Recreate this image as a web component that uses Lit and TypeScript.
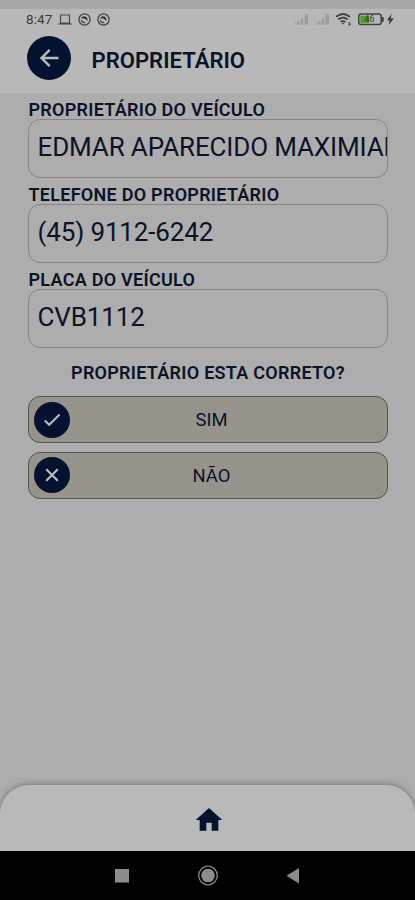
import { LitElement, html, css, svg } from "lit";
import { customElement } from "lit/decorators.js";

@customElement("app-field")
class AppField extends LitElement {
  static properties = { label: {}, value: {} };
  declare label: string;
  declare value: string;
  static styles = css`
    :host { display: block; height: 85px; box-sizing: border-box; }
    .label { height: 26px; line-height: 33px; padding-left: 0.5px; font-size: 18px; font-weight: 600; letter-spacing: 0.27px; white-space: nowrap; }
    .box { height: 59px; box-sizing: border-box; border: 1px solid #858585; border-radius: 12px;
      padding-left: 8.5px; overflow: hidden; white-space: nowrap; font-size: 26px; letter-spacing: -0.14px; line-height: 55px; }
    .value { display: block; overflow: hidden; }
  `;
  render() {
    return html`<div class="label">${this.label}</div>
      <div class="box"><span class="value">${this.value}</span></div>`;
  }
}

@customElement("app-root")
class AppRoot extends LitElement {
  static styles = css`
    :host { display: flex; flex-direction: column; width: 415px; height: 900px; overflow: hidden;
      background: #adadad; color: #0b1329; font-family: Roboto, "Liberation Sans", sans-serif; }
    svg { display: block; flex: none; }
    .strip { height: 9px; background: #a9a9a9; flex: none; }
    header { height: 84px; flex: none; background: #b8b8b8; }
    .status { height: 21px; display: flex; align-items: center; padding: 0 20px 0 26px; box-sizing: border-box; color: #3b3b3b; }
    .time { font-size: 13.5px; line-height: 21px; width: 32px; letter-spacing: 0.1px; }
    .grow { flex: 1; }
    .bar { display: flex; align-items: center; padding-left: 27px; margin-top: 6px; height: 44px; }
    .round { display: flex; align-items: center; justify-content: center; border-radius: 50%; background: #03132f; flex: none; }
    .back { width: 44px; height: 44px; }
    h1 { margin: 4px 0 0 20.5px; font-size: 22.1px; line-height: 28px; font-weight: 600; }
    main { flex: 1; padding: 0 27px 0 28px; }
    .question { height: 48px; line-height: 49px; text-align: center; font-size: 18px; font-weight: 600; letter-spacing: 0.27px; }
    .choice { height: 47px; box-sizing: border-box; border: 1px solid #555550; border-radius: 12px; background: #96938a;
      display: flex; align-items: center; padding: 0 34px 0 5px; margin-bottom: 8.5px; font-size: 18.4px; }
    .choice .round { width: 36px; height: 36px; }
    .choice span { flex: 1; text-align: center; }
    .nav { height: 66px; flex: none; border-radius: 29px 29px 0 0; background: #b9b9b9; box-shadow: 0 -1px 6px #777;
      display: flex; justify-content: center; padding: 19px 0 0 3px; box-sizing: border-box; }
  `;

  private signal() {
    return svg`<path d="M0 12.5h2v-2zM3 12.5h2.5V8.5L3 10zM6.7 12.5h2.5V6L6.7 7.5zM10.5 12.5h3.5V5h-3.5z" fill="#9c9c9c"/><path d="M11 2l3 3M14 2l-3 3" stroke="#858585"/>`;
  }
  private swirl() {
    return html`<svg width="19" height="15" viewBox="0 0 19 15"><circle cx="7.5" cy="7.5" r="5.6" fill="none" stroke="#444" stroke-width="1.3"/><path d="M4.2 6.8Q4.4 4.3 7.2 4.3Q10.6 4.6 10.6 8.8L7 6.2z" fill="#333"/><path d="M4.3 8.2Q5 10.8 8.2 10.7" fill="none" stroke="#444" stroke-width="1.2"/></svg>`;
  }
  render() {
    return html`
      <div class="strip"></div>
      <header>
        <div class="status">
          <span class="time">8:47</span>
          <svg width="19" height="15" viewBox="0 0 19 15"><path d="M2.5 3h9v8h-9zM0 12h14" fill="none" stroke="#494949" stroke-width="1.2"/></svg>
          ${this.swirl()}${this.swirl()}
          <span class="grow"></span>
          <svg width="21" height="15" viewBox="0 0 21 15">${this.signal()}</svg>
          <svg width="21" height="15" viewBox="0 0 21 15">${this.signal()}</svg>
          <svg width="22" height="15" viewBox="0 0 22 15"><g fill="none" stroke="#424242" stroke-width="1.7"><path d="M0 4.8Q7 -.8 14 4.8M2.3 7.5Q7 3.7 11.7 7.5M4.7 10Q7 8.2 9.3 10"/></g><path d="M5.6 11h2.8L7 12.8zM12 12h3l-1.5 1.8zM12 11.5h3l-1.5-1.8z" fill="#444"/></svg>
          <svg width="29" height="15" viewBox="0 0 29 15"><rect x=".8" y="2" width="22.4" height="10.6" rx="2.6" fill="none" stroke="#414141" stroke-width="1.5"/><path d="M24.8 5v4.8" stroke="#414141" stroke-width="1.8"/><rect x="2.3" y="3.7" width="9" height="7.2" rx="1" fill="#4f9e25"/><text x="6.5" y="10.4" font-size="8.7" font-family="Roboto" fill="#303a2b">46</text></svg>
          <svg width="8" height="15" viewBox="0 0 8 15"><path d="M4.6 1.8L0 8.2h2.8L1.6 13l5.2-6.6H3.6z" fill="#333"/></svg>
        </div>
        <div class="bar">
          <div class="round back"><svg width="22" height="22" viewBox="0 0 22 22"><path d="M20.5 11H3.5M11.7 2.8L3.5 11l8.2 8.2" fill="none" stroke="#b6b9be" stroke-width="2.4"/></svg></div>
          <h1>PROPRIETÁRIO</h1>
        </div>
      </header>
      <main>
        <app-field label="PROPRIETÁRIO DO VEÍCULO" value="EDMAR APARECIDO MAXIMIANO"></app-field>
        <app-field label="TELEFONE DO PROPRIETÁRIO" value="(45) 9112-6242"></app-field>
        <app-field label="PLACA DO VEÍCULO" value="CVB1112"></app-field>
        <div class="question">PROPRIETÁRIO ESTA CORRETO?</div>
        <div class="choice"><div class="round"><svg width="18" height="18" viewBox="0 0 18 18"><path d="M1.8 9.5l4.4 4.3L16.6 3.5" fill="none" stroke="#b9bbc0" stroke-width="2"/></svg></div><span>SIM</span></div>
        <div class="choice"><div class="round"><svg width="18" height="18" viewBox="0 0 18 18"><path d="M3.3 3.3l11.4 11.4M14.7 3.3L3.3 14.7" fill="none" stroke="#b9bbc0" stroke-width="2.2"/></svg></div><span>NÃO</span></div>
      </main>
      <div class="nav"><svg width="32" height="32" viewBox="0 0 24 24"><path d="M10 20v-6h4v6h5v-8h3L12 3 2 12h3v8z" fill="#03132f"/></svg></div>
      <svg width="415" height="49" viewBox="0 0 415 49"><path d="M0 0h415v49H0z"/><path d="M115 18h14v13.5h-14zM299 17v15.5l-12.5-7.7z" fill="#8c8c8c"/><circle cx="208" cy="24.5" r="9.3" fill="none" stroke="#858585" stroke-width="1.3"/><circle cx="208" cy="24.5" r="6.8" fill="#8c8c8c"/></svg>`;
  }
}
